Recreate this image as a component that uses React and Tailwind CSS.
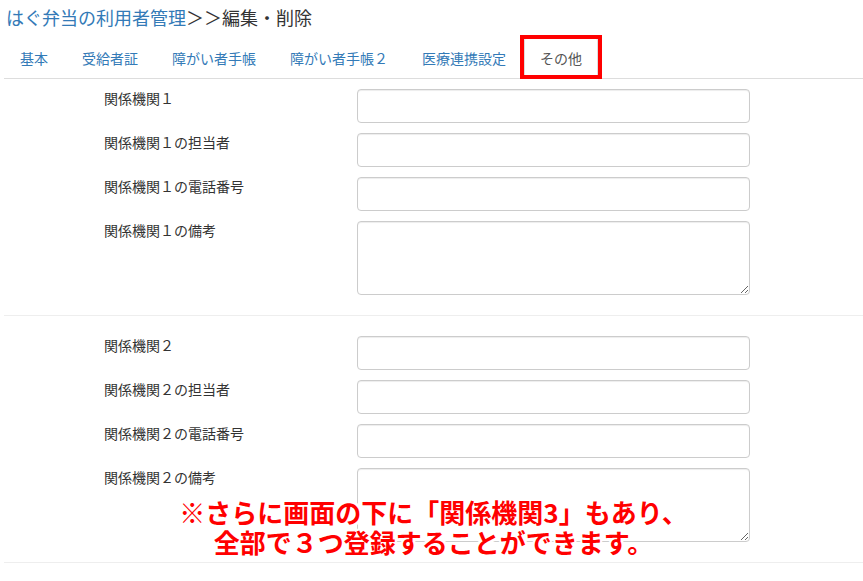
const tabs = ["基本", "受給者証", "障がい者手帳", "障がい者手帳２", "医療連携設定", "その他"];

const section = (n) => [
  { label: `関係機関${n}`, type: "input" },
  { label: `関係機関${n}の担当者`, type: "input" },
  { label: `関係機関${n}の電話番号`, type: "input" },
  { label: `関係機関${n}の備考`, type: "textarea" },
];

function FormRow({ label, type }) {
  return (
    <div className="flex">
      <label className="w-[353px] shrink-0 pl-[100px] -mt-[1px] text-[14px] leading-5 text-[#333]">{label}</label>
      {type === "input" ? (
        <input type="text" className="w-[393px] h-[34px] border border-[#ccc] rounded-[4px] px-3 shadow-[inset_0_1px_1px_rgba(0,0,0,0.075)] outline-none" />
      ) : (
        <textarea rows={3} className="w-[393px] h-[74px] border border-[#ccc] rounded-[4px] px-3 py-[6px] shadow-[inset_0_1px_1px_rgba(0,0,0,0.075)] outline-none" />
      )}
    </div>
  );
}

export default function App() {
  const active = "その他";

  return (
    <div className="relative w-[863px] h-[581px] overflow-hidden bg-white font-['Noto_Sans_CJK_JP','Noto_Sans',sans-serif] text-[#333]">
      <h1 className="h-[37px] pl-[6px] pt-[4px] text-[18px] leading-[26px] font-normal">
        <span className="text-[#337ab7]">はぐ弁当の利用者管理</span>
        <span>＞＞編集・削除</span>
      </h1>

      <div className="pl-[4px]">
        {/* tabs */}
        <ul className="flex border-b border-[#ddd] h-[42px]">
          {tabs.map((t) => {
            const isActive = t === active;
            return (
              <li key={t} className="mr-[2px] -mb-px">
                <a
                  className={
                    isActive
                      ? "relative block h-[42px] px-[15px] py-[10px] text-[14px] leading-5 border border-[#ddd] border-b-white rounded-t-[4px] bg-white text-[#555]"
                      : "block h-[42px] px-[15px] py-[10px] text-[14px] leading-5 border border-transparent text-[#337ab7]"
                  }
                >
                  {t}
                  {isActive && (
                    <span className="absolute -left-[5px] -right-[5px] -top-[3px] -bottom-[1px] border-4 border-[#ff0000]" />
                  )}
                </a>
              </li>
            );
          })}
        </ul>

        {/* form */}
        <div className="pt-[10px]">
          {[1, 2].map((n) => (
            <div key={n}>
              <div className="flex flex-col gap-[10px]">
                {section(n === 1 ? "１" : "２").map((r) => (
                  <FormRow key={r.label} {...r} />
                ))}
              </div>
              <hr className="my-[20px] border-0 border-t border-[#eee]" />
            </div>
          ))}
        </div>
      </div>

      {/* annotation */}
      <div className="absolute left-[4px] right-0 top-[497px] text-center text-[26px] leading-[30px] font-bold text-[#ff0000] [text-shadow:2px_0_0_#fff,-2px_0_0_#fff,0_2px_0_#fff,0_-2px_0_#fff,2px_2px_0_#fff,-2px_-2px_0_#fff,2px_-2px_0_#fff,-2px_2px_0_#fff]">
        <p>※さらに画面の下に「関係機関3」もあり、</p>
        <p>全部で３つ登録することができます。</p>
      </div>
    </div>
  );
}
